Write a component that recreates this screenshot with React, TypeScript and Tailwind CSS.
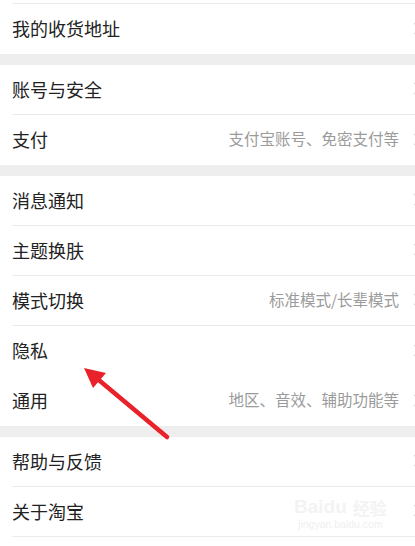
import React from 'react'

type Item = { label: string; value?: string; line?: boolean }

const groups: Item[][] = [
  [{ label: '我的收货地址' }],
  [{ label: '账号与安全', line: true }, { label: '支付', value: '支付宝账号、免密支付等' }],
  [
    { label: '消息通知', line: true },
    { label: '主题换肤', line: true },
    { label: '模式切换', value: '标准模式/长辈模式', line: true },
    { label: '隐私' },
    { label: '通用', value: '地区、音效、辅助功能等' }
  ],
  [{ label: '帮助与反馈', line: true }, { label: '关于淘宝', line: true }]
]

const Chevron = () => (
  <svg width="8" height="13" viewBox="0 0 8 13" className="shrink-0 ml-[14px] mr-[-6px]">
    <path d="M1 1l5.5 5.5L1 12" fill="none" stroke="#dcdcdc" strokeWidth="1.2" />
  </svg>
)

const Row: React.FC<{ item: Item }> = ({ item }) => (
  <div
    className={`ml-3 h-[50px] pb-[2px] flex items-center ${item.line ? 'border-b border-[#ebebeb]' : ''}`}
  >
    <span className="text-[18px] text-[#222222] leading-none">{item.label}</span>
    <div className="flex-1" />
    {item.value && (
      <span className="text-[15.5px] text-[#9b9b9b] leading-none whitespace-nowrap">{item.value}</span>
    )}
    <Chevron />
  </div>
)

export default function App() {
  return (
    <div
      className="relative w-[415px] h-[546px] overflow-hidden bg-white"
      style={{ fontFamily: '"Noto Sans CJK SC", "Noto Sans", sans-serif' }}
    >
      <div className="ml-3 h-[4px] border-b border-[#ebebeb]" />
      {groups.map((g, i) => (
        <div key={i}>
          {i > 0 && <div className="h-[11px] bg-[#eeeeee]" />}
          {g.map(item => (
            <Row key={item.label} item={item} />
          ))}
        </div>
      ))}

      {/* watermark */}
      <div className="absolute left-[294px] top-[497px] flex flex-col items-center pointer-events-none">
        <div className="flex items-end gap-[6px] leading-none">
          <span className="text-[19px] font-bold text-[#f3f3f3]" style={{ fontFamily: '"Liberation Sans", sans-serif' }}>
            Baidu
          </span>
          <span className="text-[17px] font-bold text-[#f3f3f3]">经验</span>
        </div>
        <span className="text-[10.5px] text-[#f0f0f0] leading-none mt-[3px]" style={{ fontFamily: '"Liberation Sans", sans-serif' }}>
          jingyan.baidu.com
        </span>
      </div>

      {/* arrow */}
      <svg className="absolute left-0 top-0 pointer-events-none" width="415" height="546">
        <line x1="167" y1="437" x2="94" y2="376" stroke="#e8212a" strokeWidth="4.5" strokeLinecap="round" />
        <polygon points="84,368 106,373 93,388" fill="#e8212a" />
      </svg>
    </div>
  )
}
